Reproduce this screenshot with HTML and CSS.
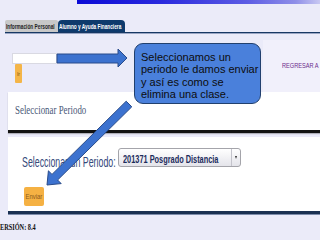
FILE: index.html
```html
<!DOCTYPE html>
<html lang="es">
<head>
<meta charset="utf-8">
<title>Seleccionar Periodo</title>
<link rel="stylesheet" href="styles.css">
</head>
<body>
<div class="page">
  <div class="topbar"></div>
  <div class="tabs">
    <div class="tab tab-grey"><span class="sq sq-tab">Información Personal</span></div>
    <div class="tab tab-navy"><span class="sq sq-tab">Alumno y Ayuda Financiera</span></div>
  </div>
  <div class="search">
    <div class="search-left">
      <div class="field"></div>
      <div class="btn-ir"><span>Ir</span></div>
    </div>
    <div class="regresar"><span class="sq sq-reg">REGRESAR A</span></div>
  </div>
  <div class="panel panel1">
    <span class="sq title">Seleccionar Periodo</span>
  </div>
  <div class="panel panel2">
    <div class="row">
      <div class="label-box"><span class="sq label">Seleccionar un Periodo:</span></div>
      <div class="select">
        <div class="sel-text"><span class="sq sel-value">201371 Posgrado Distancia</span></div>
        <div class="sel-arrow"><span class="tri"></span></div>
      </div>
    </div>
    <div class="btn-enviar"><span class="sq sq-btn">Enviar</span></div>
  </div>
  <div class="version"><span class="sq ver">ERSIÓN: 8.4</span></div>

  <svg class="arrows" width="320" height="240" viewBox="0 0 320 240">
    <polygon class="arrow" points="57,54 118,54 118,49 127,58 118,67 118,63 57,63"/>
    <polygon class="arrow" points="47,185 61.2,183.6 57.6,180 131.8,106.8 126.2,101.2 52,174.4 48.4,170.8"/>
  </svg>
  <div class="callout">Seleccionamos un<br>periodo le damos enviar<br>y así es como se<br>elimina una clase.</div>
</div>
</body>
</html>
```
FILE: styles.css
```css
html, body {
  margin: 0;
  padding: 0;
}
body {
  background: #ebebf9;
  font-family: "Liberation Sans", Arial, sans-serif;
}
.page {
  position: relative;
  width: 320px;
  height: 240px;
  overflow: hidden;
  background: #ebebf9;
}
.sq {
  display: inline-block;
  white-space: nowrap;
  transform-origin: left center;
}
.topbar {
  height: 4px;
  margin-left: 77px;
  background: linear-gradient(90deg, #0a0ad6 0%, #2a2ade 35%, #5c5ce4 70%, #8f8fe8 90%, #c8c8f2 100%);
}
.tabs {
  display: flex;
  margin: 16px 0 0 5px;
  height: 12px;
  border-bottom: 1px solid #173864;
  box-shadow: 0 1px 0 #9aa6c4;
}
.tab {
  flex: none;
  display: flex;
  align-items: center;
  padding: 0 1px;
  box-sizing: border-box;
  overflow: hidden;
  font-weight: bold;
  font-size: 7px;
}
.sq-tab {
  transform: scaleX(0.68);
}
.tab-grey {
  width: 53px;
  background: #c8c8c8;
  color: #1e1e1e;
  border-radius: 2px 2px 0 0;
}
.tab-navy {
  width: 67px;
  background: #0e3a6c;
  color: #ffffff;
  border-radius: 4px 4px 0 0;
}
.search {
  display: flex;
  justify-content: space-between;
  height: 59px;
}
.search-left {
  padding: 20px 0 0 12px;
}
.field {
  width: 45px;
  height: 11px;
  box-sizing: border-box;
  background: #ffffff;
  border: 1px solid #d9d9e2;
}
.btn-ir {
  margin-left: 3px;
  width: 7px;
  height: 19px;
  background: #f4b548;
  border-radius: 1px;
  display: flex;
  align-items: center;
  justify-content: center;
  font-size: 5px;
  color: #7a5010;
}
.regresar {
  width: 57px;
  margin-top: 7px;
  box-sizing: border-box;
  padding: 21px 0 0 19px;
  background: #f1f0fb;
  overflow: hidden;
  font-size: 7.5px;
  color: #6c2c8c;
}
.sq-reg {
  transform: scaleX(0.75);
}
.panel {
  margin-left: 8px;
  background: #ffffff;
  box-sizing: border-box;
}
.panel1 {
  height: 41px;
  padding: 8px 0 0 7px;
  border-bottom: 3px solid #131313;
  box-shadow: 0 1px 1px rgba(0, 0, 0, 0.25);
}
.title {
  font-family: "Liberation Serif", "Times New Roman", serif;
  font-size: 12px;
  color: #4a5878;
  transform: scaleX(0.74);
}
.panel2 {
  margin-top: 4px;
  height: 77px;
  padding: 11px 0 0 14px;
  border-bottom: 3px solid #1a3052;
  box-shadow: 0 1px 0 #7d8cab;
}
.row {
  display: flex;
  height: 19px;
}
.label-box {
  flex: none;
  width: 96px;
  padding-top: 6px;
  line-height: 16px;
}
.label {
  font-size: 14px;
  color: #34487a;
  transform: scaleX(0.63);
}
.select {
  flex: none;
  display: flex;
  align-items: center;
  width: 123px;
  height: 19px;
  box-sizing: border-box;
  border: 1px solid #a4a4aa;
  border-radius: 3px;
  background: linear-gradient(#ffffff, #e4e4ea);
}
.sel-text {
  flex: 1;
  min-width: 0;
  padding-left: 4px;
}
.sel-value {
  font-size: 11px;
  font-weight: bold;
  color: #1c2c5c;
  transform: scaleX(0.67);
}
.sel-arrow {
  flex: none;
  width: 8px;
  height: 100%;
  border-left: 1px solid #c4c4cc;
  display: flex;
  align-items: center;
  justify-content: center;
}
.tri {
  width: 0;
  height: 0;
  border-left: 1.5px solid transparent;
  border-right: 1.5px solid transparent;
  border-top: 3px solid #333;
}
.btn-enviar {
  margin: 20px 0 0 2px;
  width: 20px;
  height: 19px;
  background: #f5b143;
  border-radius: 2px;
  display: flex;
  align-items: center;
  justify-content: center;
  font-size: 7px;
  color: #8b5a1c;
}
.sq-btn {
  transform: scaleX(0.85);
  transform-origin: center;
}
.version {
  margin-top: 6px;
  line-height: 10px;
}
.ver {
  font-family: "Liberation Serif", "Times New Roman", serif;
  font-weight: bold;
  font-size: 9px;
  color: #111111;
  transform: scaleX(0.7);
}
.arrows {
  position: absolute;
  left: 0;
  top: 0;
  pointer-events: none;
}
.arrow {
  fill: #3c72cf;
  stroke: #294b8a;
  stroke-width: 1;
  stroke-linejoin: miter;
}
.callout {
  position: absolute;
  left: 134px;
  top: 43px;
  width: 127px;
  height: 61px;
  box-sizing: border-box;
  padding: 7px 0 0 6px;
  background: #4a80db;
  border: 1px solid #22406e;
  border-radius: 9px;
  font-size: 11px;
  line-height: 12.3px;
  color: #0d0d0d;
  white-space: nowrap;
}
```
